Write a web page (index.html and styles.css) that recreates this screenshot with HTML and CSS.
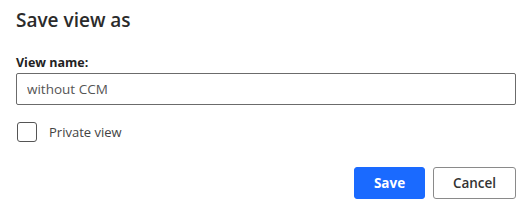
FILE: index.html
```html
<!DOCTYPE html>
<html lang="en">
<head>
  <meta charset="UTF-8">
  <title>Save view as</title>
  <link rel="stylesheet" href="styles.css">
</head>
<body>
  <div class="dialogo">
    <h2 class="titulo">Save view as</h2>
    <label class="rotulo" for="nome-view">View name:</label>
    <input class="campo" type="text" id="nome-view" value="without CCM">
    <label class="checagem">
      <span class="caixa"></span>
      <span>Private view</span>
    </label>
    <div class="acoes">
      <button class="btn primario">Save</button>
      <button class="btn">Cancel</button>
    </div>
  </div>
</body>
</html>
```

FILE: styles.css
```css
body {
  margin: 0;
  background: #fff;
  font-family: "Open Sans", "Noto Sans", Arial, sans-serif;
  color: #333;
}
.dialogo {
  padding: 6px 12px 0 16px;
  display: flex;
  flex-direction: column;
}
.titulo {
  margin: 0;
  font-size: 19px;
  font-weight: 600;
  line-height: 28px;
  color: #2b2b2b;
}
.rotulo {
  margin-top: 20px;
  font-size: 12.5px;
  font-weight: 700;
  line-height: 18px;
  color: #222;
}
.campo {
  margin-top: 1px;
  height: 32px;
  box-sizing: border-box;
  width: 500px;
  border: 1px solid #6b6b6b;
  border-radius: 2px;
  padding: 0 10px;
  font-family: inherit;
  font-size: 13.5px;
  color: #555;
  outline: none;
}
.checagem {
  margin-top: 17px;
  display: flex;
  align-items: center;
  gap: 12px;
  font-size: 13px;
  color: #444;
  padding-left: 1px;
}
.caixa {
  width: 20px;
  height: 20px;
  box-sizing: border-box;
  border: 1px solid #555;
  border-radius: 3px;
}
.acoes {
  margin-top: 25px;
  display: flex;
  justify-content: flex-end;
  gap: 8px;
  width: 500px;
}
.btn {
  height: 32px;
  width: 83px;
  padding: 0;
  font-family: inherit;
  font-size: 13.5px;
  font-weight: 600;
  background: #fff;
  color: #333;
  border: 1px solid #8a8a8a;
  border-radius: 3px;
}
.btn.primario {
  width: 71px;
  background: #1a6aff;
  border-color: #1a6aff;
  color: #fff;
  font-weight: 700;
}
```
